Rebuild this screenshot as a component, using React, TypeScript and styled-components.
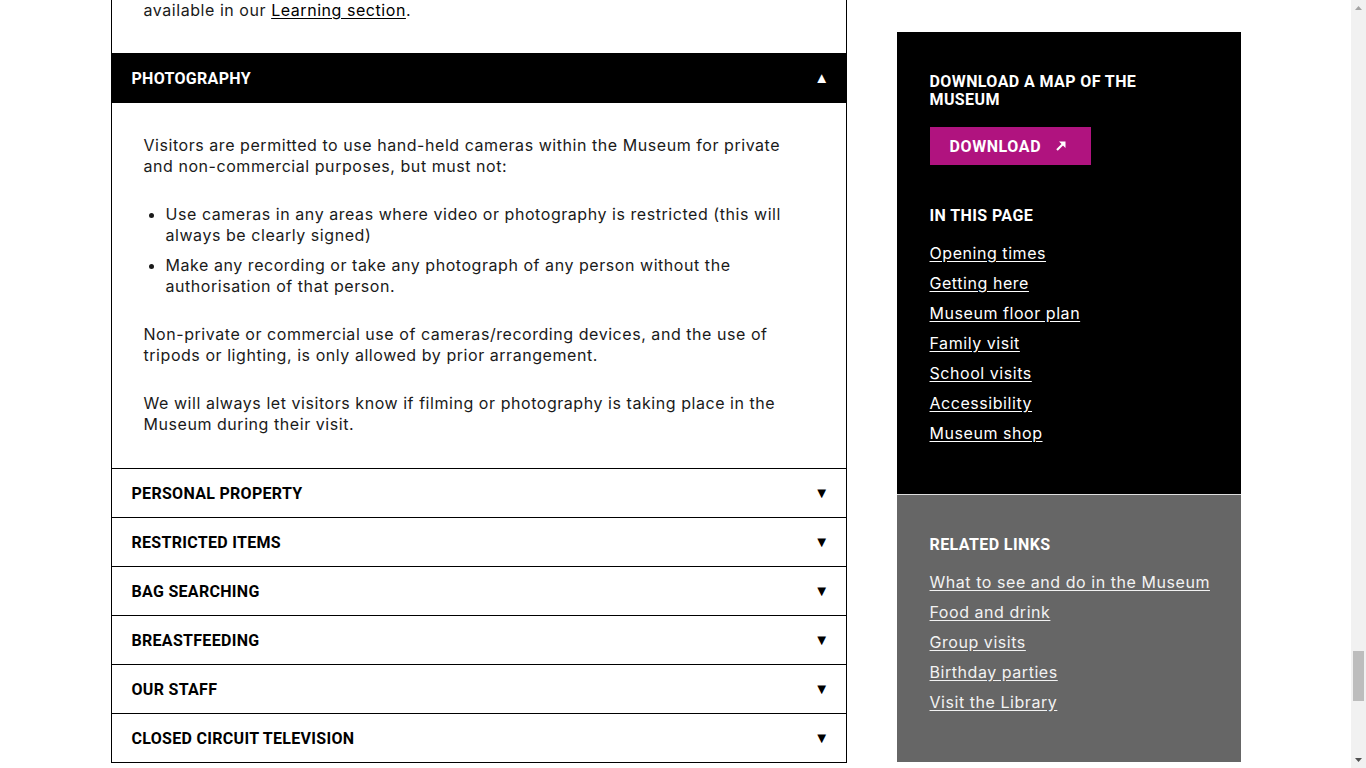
import React from "react";
import styled, { createGlobalStyle } from "styled-components";

const Global = createGlobalStyle`
  html, body { overflow: hidden; }
  body {
    margin: 0;
    background: #fff;
    color: #000;
    font-family: "Inter", "Open Sans", sans-serif;
  }
  * { box-sizing: border-box; }
`;

const Shell = styled.div`
  display: flex;
  height: 768px;
`;

const Main = styled.main`
  flex: 1;
  min-width: 0;
`;

const ScrollTrack = styled.div`
  width: 15px;
  flex: none;
  background: #f1f1f1;
  svg { display: block; }
`;

const Page = styled.div`
  width: 1130px;
  margin: 0 auto;
  display: grid;
  grid-template-columns: 736px 344px;
  column-gap: 50px;
  align-items: start;
`;

const Accordion = styled.div`
  border-left: 1px solid #000;
  border-right: 1px solid #000;
  border-bottom: 1px solid #000;
`;

const Item = styled.section`
  border-top: 1px solid #000;
  &:first-child { border-top: none; }
`;

const Header = styled.div<{ $open?: boolean }>`
  height: ${(p) => (p.$open ? 49 : 48)}px;
  display: flex;
  align-items: center;
  justify-content: space-between;
  padding: 0 16px 0 20px;
  background: ${(p) => (p.$open ? "#000" : "#fff")};
  color: ${(p) => (p.$open ? "#fff" : "#000")};
  font-family: "Roboto", sans-serif;
  font-weight: 700;
  font-size: 16px;
  letter-spacing: 0.3px;
`;

const Caret = styled.span`
  font-size: 15px;
  line-height: 1;
`;

const Body = styled.div<{ $top?: number; $bottom?: number }>`
  padding: ${(p) => p.$top ?? 32}px 32px ${(p) => p.$bottom ?? 33}px 32px;
  font-size: 16px;
  line-height: 21px;
  letter-spacing: 0.55px;
  color: #1a1a1a;
`;

const P = styled.p`
  margin: 0 0 27px;
  &:last-child { margin-bottom: 0; }
`;

const List = styled.ul`
  margin: 0 0 27px;
  padding-left: 22px;
  li { margin-bottom: 9px; }
  li:last-child { margin-bottom: 0; }
`;

const BodyLink = styled.a`
  color: #000;
  text-decoration: underline;
  text-underline-offset: 2px;
`;

const Aside = styled.aside`
  margin-top: 32px;
  display: flex;
  flex-direction: column;
`;

const Panel = styled.div<{ $bg: string; $pb: number; $linkColor: string }>`
  background: ${(p) => p.$bg};
  padding: 41px 33px ${(p) => p.$pb}px;
  color: #fff;
  a { color: ${(p) => p.$linkColor}; }
`;

const Divider = styled.div`
  height: 1px;
  background: #ddd;
`;

const Heading = styled.h3<{ $mb?: number }>`
  margin: 0 0 ${(p) => p.$mb ?? 18}px;
  font-family: "Roboto", sans-serif;
  font-weight: 700;
  font-size: 16px;
  line-height: 18px;
  text-transform: uppercase;
  letter-spacing: 0.4px;
  width: 230px;
`;

const Button = styled.a`
  display: inline-flex;
  align-items: center;
  gap: 14px;
  height: 38px;
  width: 161px;
  padding: 0 20px;
  background: #b0137f;
  color: #fff;
  font-family: "Roboto", sans-serif;
  font-weight: 700;
  font-size: 16px;
  letter-spacing: 0.6px;
  text-decoration: none;
  margin-bottom: 42px;
`;

const Links = styled.ul`
  list-style: none;
  margin: 0;
  padding: 0;
  li {
    height: 30px;
    font-size: 16px;
    line-height: 20px;
    letter-spacing: 0.55px;
    white-space: nowrap;
  }
  a {
    text-decoration: underline;
    text-underline-offset: 2px;
  }
`;

const Arrow = () => (
  <svg width="12" height="12" viewBox="0 0 12 12" aria-hidden="true">
    <path d="M2 10 L9 3" stroke="#fff" strokeWidth="2.2" />
    <path d="M4 1.5 H10.5 V8 Z" fill="#fff" />
  </svg>
);

const Scrollbar = () => (
  <ScrollTrack>
    <svg width="15" height="768" viewBox="0 0 15 768" aria-hidden="true">
      <path d="M4 10 L7.5 6 L11 10 Z" fill="#a3a3a3" />
      <rect x="2" y="651" width="11" height="50" fill="#bdbdbd" />
      <path d="M4 758 L11 758 L7.5 762 Z" fill="#505050" />
    </svg>
  </ScrollTrack>
);

const closed = [
  "Personal property",
  "Restricted items",
  "Bag searching",
  "Breastfeeding",
  "Our staff",
  "Closed circuit television",
];

const inPage = [
  "Opening times",
  "Getting here",
  "Museum floor plan",
  "Family visit",
  "School visits",
  "Accessibility",
  "Museum shop",
];

const related = [
  "What to see and do in the Museum",
  "Food and drink",
  "Group visits",
  "Birthday parties",
  "Visit the Library",
];

export default function App() {
  return (
    <>
      <Global />
      <Shell>
        <Main>
          <Page>
            <Accordion>
              <Item>
                <Body $top={0} $bottom={32}>
                  <P>
                    available in our <BodyLink href="#">Learning section</BodyLink>.
                  </P>
                </Body>
              </Item>
              <Item>
                <Header $open>
                  <span>PHOTOGRAPHY</span>
                  <Caret>▲</Caret>
                </Header>
                <Body>
                  <P>
                    Visitors are permitted to use hand-held cameras within the Museum for private
                    and non-commercial purposes, but must not:
                  </P>
                  <List>
                    <li>
                      Use cameras in any areas where video or photography is restricted (this will
                      always be clearly signed)
                    </li>
                    <li>
                      Make any recording or take any photograph of any person without the
                      authorisation of that person.
                    </li>
                  </List>
                  <P>
                    Non-private or commercial use of cameras/recording devices, and the use of
                    tripods or lighting, is only allowed by prior arrangement.
                  </P>
                  <P>
                    We will always let visitors know if filming or photography is taking place in
                    the Museum during their visit.
                  </P>
                </Body>
              </Item>
              {closed.map((t) => (
                <Item key={t}>
                  <Header>
                    <span>{t.toUpperCase()}</span>
                    <Caret>▼</Caret>
                  </Header>
                </Item>
              ))}
            </Accordion>
            <Aside>
              <Panel $bg="#000" $pb={41} $linkColor="#fff">
                <Heading>Download a map of the Museum</Heading>
                <Button href="#">
                  DOWNLOAD <Arrow />
                </Button>
                <Heading>In this page</Heading>
                <Links>
                  {inPage.map((l) => (
                    <li key={l}>
                      <a href="#">{l}</a>
                    </li>
                  ))}
                </Links>
              </Panel>
              <Divider />
              <Panel $bg="#666" $pb={40} $linkColor="#f2f2f2">
                <Heading>Related links</Heading>
                <Links>
                  {related.map((l) => (
                    <li key={l}>
                      <a href="#">{l}</a>
                    </li>
                  ))}
                </Links>
              </Panel>
            </Aside>
          </Page>
        </Main>
        <Scrollbar />
      </Shell>
    </>
  );
}
